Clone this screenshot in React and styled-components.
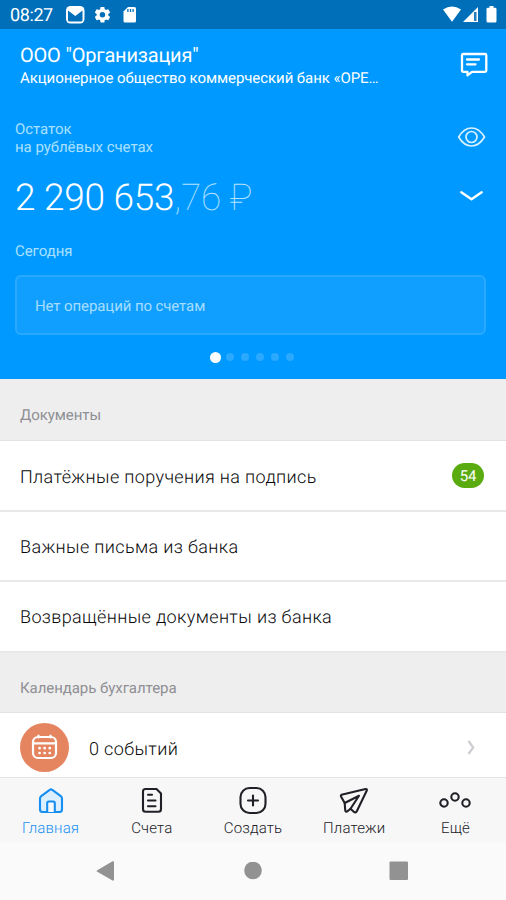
import React from 'react';
import styled, { createGlobalStyle } from 'styled-components';

const GlobalStyle = createGlobalStyle`
  * { box-sizing: border-box; }
  body { margin: 0; }
`;

const Screen = styled.div`
  width: 506px;
  height: 900px;
  overflow: hidden;
  display: flex;
  flex-direction: column;
  background: #fff;
  color: #08080a;
  font-family: Roboto, sans-serif;
  text-rendering: geometricPrecision;
  white-space: nowrap;
`;

const StatusBar = styled.div`
  height: 29px;
  flex: none;
  display: flex;
  align-items: center;
  justify-content: space-between;
  padding: 0 8px 0 10px;
  background: #006fba;
  color: #fff;
  svg { display: block; }
`;

const StatusGroup = styled.div`
  display: flex;
  align-items: center;
`;

const Clock = styled.span`
  width: 55px;
  font-size: 18px;
  line-height: 29px;
  letter-spacing: -0.4px;
  padding-top: 2px;
`;

const Hero = styled.section`
  height: 350px;
  flex: none;
  display: flex;
  flex-direction: column;
  background: #0099ff;
  color: #fff;
`;

const HeroRow = styled.div`
  display: flex;
  justify-content: space-between;
  align-items: flex-start;
  height: ${(p) => p.$height}px;
  padding: ${(p) => p.$pad};
  svg { display: block; flex: none; overflow: visible; }
`;

const OrgName = styled.h1`
  margin: 0;
  font-size: 20px;
  font-weight: 400;
  line-height: 24px;
  letter-spacing: -0.2px;
`;

const BankName = styled.div`
  font-size: 15px;
  line-height: 22px;
  letter-spacing: -0.07px;
`;

const Caption = styled.div`
  color: #a9e0ff;
  font-size: 15px;
  line-height: 18px;
  letter-spacing: -0.05px;
`;

const Amount = styled.div`
  font-size: 37px;
  font-weight: 300;
  line-height: 48px;
  letter-spacing: -0.27px;
`;

const Cents = styled.span`
  color: #b4e2ff;
  font-weight: 100;
`;

const Today = styled(Caption)`
  padding: 0 15px;
  height: 33px;
`;

const EmptyCard = styled.div`
  height: 60px;
  margin: 0 20px 0 15px;
  padding: 0 18px;
  border: 2px solid #29a9ff;
  border-radius: 6px;
  background: #109fff;
  color: #a5ddff;
  font-size: 15px;
  line-height: 58px;
  letter-spacing: -0.1px;
`;

const Dots = styled.div`
  display: flex;
  align-items: center;
  height: 44px;
  padding-left: 210px;
  gap: 7px;
`;

const Dot = styled.i`
  width: ${(p) => (p.$active ? 11 : 8)}px;
  height: ${(p) => (p.$active ? 11 : 8)}px;
  margin-right: ${(p) => (p.$active ? -2 : 0)}px;
  border-radius: 50%;
  background: ${(p) => (p.$active ? '#fff' : '#2ba9ff')};
`;

const SectionTitle = styled.h2`
  margin: 0;
  flex: none;
  height: ${(p) => p.$height}px;
  padding: ${(p) => p.$top}px 20px 0;
  background: #eee;
  border-bottom: 1px solid #e2e2e2;
  color: #8f8f94;
  font-size: 15px;
  font-weight: 400;
  line-height: 50px;
  letter-spacing: -0.06px;
`;

const Row = styled.div`
  flex: none;
  display: flex;
  align-items: center;
  justify-content: space-between;
  height: ${(p) => p.$height}px;
  padding: ${(p) => p.$top}px 22px 0 20px;
  border-bottom: 2px solid #e8e8e8;
  font-size: 18px;
  font-weight: 300;
  letter-spacing: 0.36px;
`;

const Badge = styled.span`
  width: 32px;
  height: 25px;
  margin-top: -3px;
  border-radius: 13px;
  background: #5aab10;
  color: #fff;
  font-size: 15px;
  font-weight: 400;
  letter-spacing: -0.2px;
  line-height: 26px;
  text-align: center;
`;

const EventRow = styled.div`
  flex: none;
  display: flex;
  align-items: center;
  height: 64px;
  padding: 5px 28px 0 20px;
  font-size: 18px;
  font-weight: 300;
  letter-spacing: 0.35px;
  svg { display: block; }
`;

const EventIcon = styled.span`
  width: 49px;
  height: 49px;
  border-radius: 50%;
  background: #e58560;
`;

const EventText = styled.span`
  flex: 1;
  padding: 3px 0 0 20px;
`;

const TabBar = styled.nav`
  flex: none;
  height: 65px;
  display: grid;
  grid-template-columns: repeat(5, 1fr);
  background: #f7f7f8;
  border-top: 1px solid #e3e3e3;
`;

const Tab = styled.div`
  display: flex;
  flex-direction: column;
  align-items: center;
  padding-top: 7px;
  color: ${(p) => (p.$active ? '#168ff0' : '#202026')};
  font-size: 15px;
  font-weight: 300;
  line-height: 20px;
  letter-spacing: 0.15px;
  svg { display: block; margin-bottom: 3px; }
`;

const TabIcon = styled.svg`
  width: 34px;
  height: 30px;
  fill: none;
  stroke: currentColor;
  stroke-width: 2.1;
  stroke-linecap: round;
  stroke-linejoin: round;
`;

const SystemNav = styled.div`
  flex: none;
  height: 58px;
  display: flex;
  align-items: center;
  justify-content: space-between;
  padding: 0 97px 0 96px;
  background: #fafafa;
  svg { display: block; }
`;

const DOCUMENTS = [
  { title: 'Платёжные поручения на подпись', count: 54, height: 71, top: 3 },
  { title: 'Важные письма из банка', height: 70, top: 3 },
  { title: 'Возвращённые документы из банка', height: 71, top: 2 },
];

const TABS = [
  {
    label: 'Главная',
    active: true,
    icon: (
      <>
        <path d="M6 13.500Q6 12 7.200 11.100L15.700 4.800Q17 4 18.300 4.800L26.800 11.100Q28 12 28 13.500V24.500Q28 27 25.500 27H8.500Q6 27 6 24.500Z" fill="#dcefff" />
        <path d="M13.200 27V18Q13.200 16.500 14.700 16.500H19.300Q20.800 16.500 20.800 18V27" fill="#f7f9fc" />
      </>
    ),
  },
  {
    label: 'Счета',
    icon: (
      <>
        <path d="M10.500 4H21.500L26 8.500V24Q26 26.800 23.500 26.800H10.500Q8 26.800 8 24V6.500Q8 4 10.500 4Z" />
        <path d="M13 9.800H17M13 15.500H20.500M13 21.200H20.500" />
      </>
    ),
  },
  {
    label: 'Создать',
    icon: (
      <>
        <rect x="4.500" y="3" width="25" height="25" rx="9" />
        <path d="M17 10.500V20.500M12 15.500H22" />
      </>
    ),
  },
  {
    label: 'Платежи',
    icon: (
      <>
        <path d="M4.500 9.800L28.500 4Q30.300 3.800 29.800 5.500L19.800 26.200Q18.500 28.300 16.800 26.700L13.500 23.800L10.500 26.300Q8.300 27.300 8.200 25L7.700 18L4 11.500Q3.500 10.200 4.500 9.800Z" />
        <path d="M7.700 18L22 10.800L13.500 23.800" />
      </>
    ),
  },
  {
    label: 'Ещё',
    icon: (
      <>
        <circle cx="6" cy="18" r="3.700" />
        <circle cx="17" cy="12" r="3.700" />
        <circle cx="28" cy="18" r="3.700" />
      </>
    ),
  },
];

function StatusIcons() {
  return (
    <svg width="76" height="24" viewBox="65 3 76 24">
      <rect x="66" y="6" width="18.500" height="17.500" rx="4.500" fill="#fff" />
      <path d="M68 10.500L75.300 16L82.500 10.500V20Q82.500 21.500 81 21.500H69.500Q68 21.500 68 20Z" fill="#006fba" />
      <g transform="translate(93.100 5.400) scale(.78)" fill="#fff">
        <path d="M19.430 12.980c.04-.32.07-.64.07-.98s-.03-.66-.07-.98l2.110-1.650c.19-.15.24-.42.12-.64l-2-3.460c-.12-.22-.39-.3-.61-.22l-2.490 1c-.52-.4-1.080-.73-1.690-.98l-.38-2.650C14.460 2.180 14.250 2 14 2h-4c-.25 0-.46.18-.49.42l-.38 2.650c-.61.25-1.170.59-1.690.98l-2.490-1c-.23-.09-.49 0-.61.22l-2 3.460c-.13.22-.07.49.12.64l2.110 1.650c-.04.32-.07.65-.07.98s.03.66.07.98l-2.110 1.650c-.19.15-.24.42-.12.64l2 3.460c.12.22.39.3.61.22l2.490-1c.52.4 1.080.73 1.690.98l.38 2.650c.03.24.24.42.49.42h4c.25 0 .46-.18.49-.42l.38-2.650c.61-.25 1.170-.59 1.690-.98l2.490 1c.23.09.49 0 .61-.22l2-3.460c.12-.22.07-.49-.12-.64zM12 15.500a3.500 3.500 0 1 1 0-7 3.500 3.500 0 0 1 0 7z" />
      </g>
      <path d="M128 7H134.500Q136 7 136 8.500V21Q136 22.500 134.500 22.500H125Q123.500 22.500 123.500 21V11.500Z" fill="#fff" />
      <path d="M127.900 9V12M130.500 9V12M133.100 9V12" stroke="#006fba" strokeWidth="1.300" />
    </svg>
  );
}

function SignalIcons() {
  return (
    <svg width="56" height="20" viewBox="442 5 56 20" fill="#fff">
      <path d="M443 9.500Q452 3.500 461 9.500L452 21.800Z" />
      <path d="M463 22L478 7V22Z" />
      <path d="M474 12H476.500V21H474Z" fill="#247fc0" />
      <path d="M489.500 6H493.500V7.700H495Q496.500 7.700 496.500 9V21Q496.500 22.500 495 22.500H488Q486.500 22.500 486.500 21V9Q486.500 7.700 488 7.700H489.500Z" />
    </svg>
  );
}

export default function App() {
  return (
    <Screen>
      <GlobalStyle />
      <StatusBar>
        <StatusGroup>
          <Clock>08:27</Clock>
          <StatusIcons />
        </StatusGroup>
        <SignalIcons />
      </StatusBar>

      <Hero>
        <HeroRow $height={91} $pad="14px 17px 0 20px">
          <div>
            <OrgName>ООО "Организация"</OrgName>
            <BankName>Акционерное общество коммерческий банк «ОРЕ…</BankName>
          </div>
          <svg width="30" height="36" viewBox="0 0 30 36" fill="none" stroke="#fff" strokeWidth="2.300" strokeLinejoin="round">
            <path d="M4.300 11H26Q27.300 11 27.300 12.300V27.500Q27.300 28.800 26 28.800H13L8.500 32.300V28.800H4.300Q3 28.800 3 27.500V12.300Q3 11 4.300 11Z" />
            <path d="M8 16.500H20M8 21.300H16.500" strokeLinecap="round" />
          </svg>
        </HeroRow>

        <HeroRow $height={47} $pad="0 20px 0 15px">
          <Caption>
            Остаток
            <br />
            на рублёвых счетах
          </Caption>
          <svg width="29" height="34" viewBox="0 0 29 34" fill="none" stroke="#d8f1ff" strokeWidth="1.700">
            <path d="M1.700 17Q7 8 14.500 8T27.500 17Q22 26 14.500 26T1.700 17Z" />
            <circle cx="14.500" cy="17" r="5.500" />
          </svg>
        </HeroRow>

        <HeroRow $height={75} $pad="8px 20px 0 15px">
          <Amount>
            2 290 653<Cents>,76 ₽</Cents>
          </Amount>
          <svg width="30" height="40" viewBox="0 0 30 40" fill="none" stroke="#fff" strokeWidth="2.400" strokeLinecap="round" strokeLinejoin="round">
            <path d="M5.300 17.300L15.500 24.300L25.700 17.300" />
          </svg>
        </HeroRow>

        <Today>Сегодня</Today>
        <EmptyCard>Нет операций по счетам</EmptyCard>
        <Dots>
          {[0, 1, 2, 3, 4, 5].map((n) => (
            <Dot key={n} $active={n === 0} />
          ))}
        </Dots>
      </Hero>

      <SectionTitle $height={62} $top={11}>Документы</SectionTitle>
      {DOCUMENTS.map((doc) => (
        <Row key={doc.title} $height={doc.height} $top={doc.top}>
          <span>{doc.title}</span>
          {doc.count && <Badge>{doc.count}</Badge>}
        </Row>
      ))}

      <SectionTitle $height={60} $top={10}>Календарь бухгалтера</SectionTitle>
      <EventRow>
        <EventIcon>
          <svg width="49" height="49" viewBox="0 0 49 49" fill="none" stroke="#fff" strokeWidth="2.200" strokeLinecap="round">
            <rect x="13" y="14" width="23" height="21" rx="5" />
            <path d="M13.500 20.300H36M18.500 12.500V14.500M30.500 12.500V14.500" />
            <path d="M19.500 25.200H19.600M24.600 25.200H24.700M29.700 25.200H29.800M19.500 30H19.600M24.600 30H24.700M29.700 30H29.800" strokeWidth="2.700" />
          </svg>
        </EventIcon>
        <EventText>0 событий</EventText>
        <svg width="12" height="18" viewBox="0 0 12 18" fill="none" stroke="#cdcdd2" strokeWidth="2.200">
          <path d="M2.500 2L7.200 8.500L2.500 15" />
        </svg>
      </EventRow>

      <TabBar>
        {TABS.map((tab) => (
          <Tab key={tab.label} $active={tab.active}>
            <TabIcon viewBox="0 0 34 30">{tab.icon}</TabIcon>
            {tab.label}
          </Tab>
        ))}
      </TabBar>

      <SystemNav>
        <svg width="19" height="20" viewBox="0 0 19 20" fill="#929292">
          <path d="M1.300 9.200L16.500 .3Q18 -.3 18 1.200V18.500Q18 20 16.500 19.500L1.300 10.800Q0 10 1.300 9.200Z" />
        </svg>
        <svg width="20" height="18" viewBox="0 0 20 18" fill="#929292">
          <circle cx="11" cy="8.500" r="8.800" />
        </svg>
        <svg width="20" height="20" viewBox="0 0 20 20" fill="#929292">
          <rect x=".5" y=".5" width="18.500" height="18.500" rx="1" />
        </svg>
      </SystemNav>
    </Screen>
  );
}
